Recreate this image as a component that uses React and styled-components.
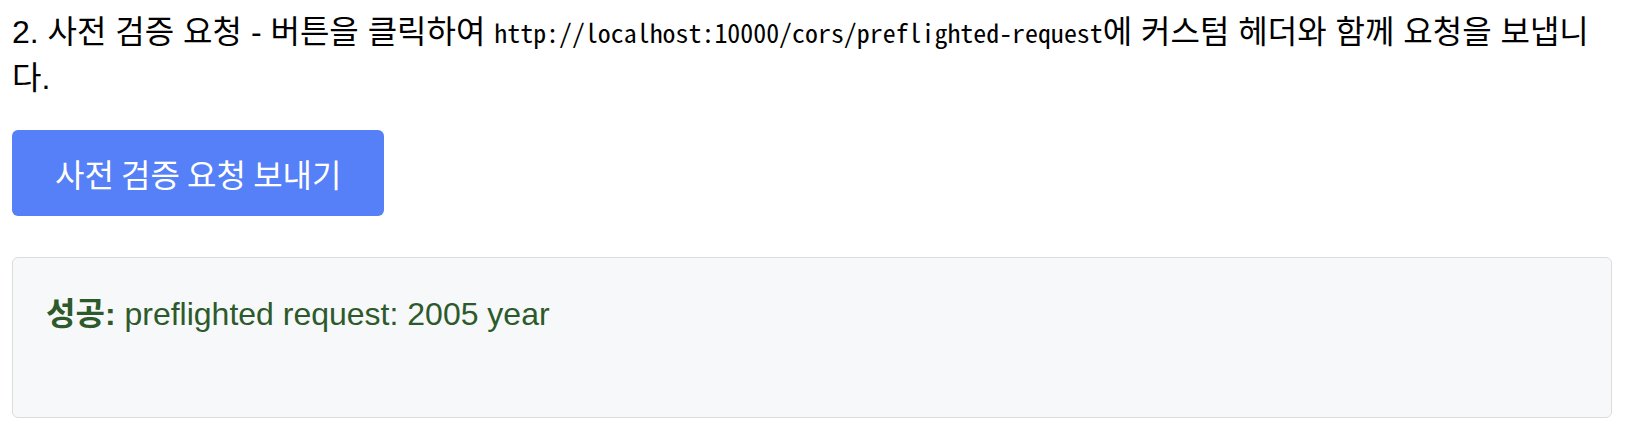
import React from "react";
import styled, { createGlobalStyle } from "styled-components";

const GlobalStyle = createGlobalStyle`
  html, body {
    margin: 0;
    padding: 0;
    background: #ffffff;
  }
  body {
    font-family: "Liberation Sans", "Noto Sans CJK KR", sans-serif;
    color: #000000;
  }
`;

const Page = styled.main`
  width: 1600px;
  padding: 9px 0 0 12px;
  display: flex;
  flex-direction: column;
  align-items: flex-start;
`;

const Description = styled.p`
  margin: 0;
  max-width: ${(p) => p.$maxWidth}px;
  font-family: "Liberation Sans", "Noto Sans CJK KR", sans-serif;
  font-size: 32px;
  line-height: 46px;
  color: #000000;
`;

const Code = styled.code`
  font-family: "Noto Sans Mono CJK KR", "Liberation Mono", monospace;
  font-size: 25.9px;
  color: #000000;
`;

const ActionButton = styled.button`
  margin-top: 29px;
  height: 86px;
  padding: 0 43px;
  display: inline-flex;
  align-items: center;
  justify-content: center;
  border: none;
  border-radius: 6px;
  background: #5580f7;
  color: #ffffff;
  font-family: "Noto Sans CJK KR", "Liberation Sans", sans-serif;
  font-size: 32px;
  line-height: 46px;
  cursor: pointer;
`;

const ResultBox = styled.section`
  margin-top: 41px;
  width: 100%;
  box-sizing: border-box;
  min-height: 161px;
  padding: 33px 33px;
  background: #f7f8fa;
  border: 1px solid #dcdcdc;
  border-radius: 6px;
`;

const ResultText = styled.p`
  margin: 0;
  font-family: "Liberation Sans", "Noto Sans CJK KR", sans-serif;
  font-size: 32px;
  line-height: 46px;
  color: ${(p) => (p.$ok ? "#2d5a2b" : "#a12a2a")};
`;

const Label = styled.strong`
  font-weight: 700;
`;

export default function App() {
  const url = "http://localhost:10000/cors/preflighted-request";
  return (
    <>
      <GlobalStyle />
      <Page>
        <Description $maxWidth={1590}>
          2. 사전 검증 요청 - 버튼을 클릭하여 <Code>{url}</Code>에 커스텀 헤더와 함께
          요청을 보냅니다.
        </Description>
        <ActionButton type="button">사전 검증 요청 보내기</ActionButton>
        <ResultBox>
          <ResultText $ok>
            <Label>성공:</Label> preflighted request: 2005 year
          </ResultText>
        </ResultBox>
      </Page>
    </>
  );
}
